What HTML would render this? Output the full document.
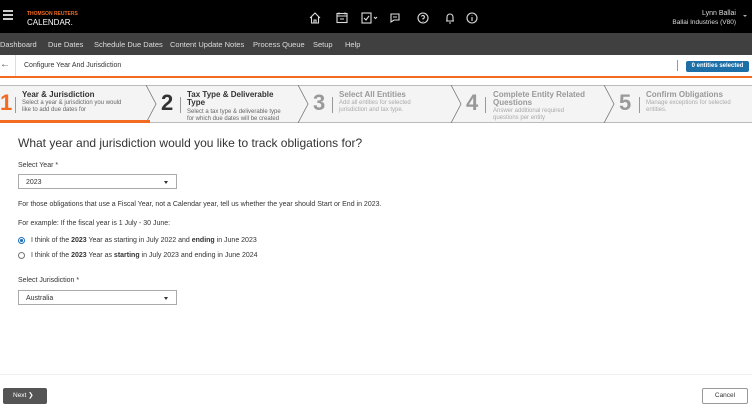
<!DOCTYPE html>
<html><head><meta charset="utf-8"><style>
*{box-sizing:border-box;margin:0;padding:0}
body{width:752px;height:418px;overflow:hidden;background:#fff;font-family:"Liberation Sans",sans-serif;color:#333;position:relative}
.abs{position:absolute}
.top{left:0;top:0;width:752px;height:33px;background:#000}
.nav{left:0;top:33px;width:752px;height:22px;background:#404040;color:#ddd;font-size:7.5px}
.nav span{position:absolute;top:7px}
.tb{left:0;top:55px;width:752px;height:23px;background:#fff;border-bottom:2px solid #f26b21}
.step{top:85px;height:38px;background:#f4f4f4;border-top:1px solid #bbb;border-bottom:1px solid #bbb}
.num{position:absolute;font-size:22px;font-weight:bold;top:4px}
.st{position:absolute;font-size:8px;font-weight:bold;line-height:8px}
.sd{position:absolute;font-size:6px;line-height:7px;color:#666}
.g .num,.g .st{color:#999}.g .sd{color:#aaa}
.bar{position:absolute;width:1px;height:16px;background:#999;top:11px}
.t{font-size:7px;color:#333}
.sel{border:1px solid #aaa;height:15px;width:159px;left:18px;font-size:7px;padding:4px 7px}
.sel:after{content:"";position:absolute;right:8px;top:6px;border:2.5px solid transparent;border-top:3px solid #333}
</style></head><body>
<div class="abs top">
 <div class="abs" style="left:3px;top:10px;width:10px;height:2px;background:#ccc;box-shadow:0 4px 0 #ccc,0 8px 0 #ccc"></div>
 <div class="abs" style="left:27px;top:11px;font-size:5px;font-weight:bold;color:#f26b21">THOMSON REUTERS</div>
 <div class="abs" style="left:27px;top:18px;font-size:8px;color:#fff">CALENDAR.</div>
 <svg class="abs" style="left:308px;top:11px" width="180" height="14" fill="none" stroke="#ddd" stroke-width="1.1">
  <path d="M2 7L7 2L12 7M3.5 6v6h7V6M6 12V9h2v3"/>
  <rect x="29" y="2.5" width="10" height="9"/><path d="M29 5h10M31 1.5v2M37 1.5v2M32 8h4"/>
  <rect x="54" y="2" width="9" height="10"/><path d="M56 7l2 2 3-4M66 6l1.5 1.5 1.5-1.5"/>
  <path d="M83 3h8v6h-5l-3 2zM85 6h4"/>
  <circle cx="115" cy="7" r="5"/><path d="M113.5 5.5a1.5 1.5 0 1 1 1.5 2v1M115 10v.5"/>
  <path d="M138 10h8M139 10V6a3 3 0 0 1 6 0v4M141 12h2"/>
  <circle cx="164" cy="7" r="5"/><path d="M164 6v4M164 4v.5"/>
 </svg>
 <div class="abs" style="right:16px;top:9px;font-size:7px;color:#ddd;text-align:right;line-height:9px">Lynn Ballai<br><span style="font-size:6.5px">Ballai Industries (V80)</span></div>
 <div class="abs" style="right:5px;top:15px;border:2px solid transparent;border-top:2.5px solid #aaa"></div>
</div>
<div class="abs nav"><span style="left:0">Dashboard</span><span style="left:48px">Due Dates</span><span style="left:94px">Schedule Due Dates</span><span style="left:170px">Content Update Notes</span><span style="left:253px">Process Queue</span><span style="left:313px">Setup</span><span style="left:345px">Help</span></div>
<div class="abs tb">
 <div class="abs" style="left:0;top:4px;font-size:10px;color:#555">&#8592;</div>
 <div class="abs" style="left:15px;top:0;width:1px;height:21px;background:#ddd"></div>
 <div class="abs" style="left:24px;top:7px;font-size:7px;color:#333">Configure Year And Jurisdiction</div>
 <div class="abs" style="left:677px;top:5px;width:1px;height:11px;background:#999"></div>
 <div class="abs" style="left:686px;top:6px;width:63px;height:11px;background:#1e6fa8;border-radius:2px;color:#fff;font-size:6px;font-weight:bold;text-align:center;line-height:11px">0 entities selected</div>
</div>
<div class="abs step" style="left:0;width:752px">
 <svg class="abs" style="left:0;top:-1px" width="752" height="38" fill="none" stroke="#777" stroke-width="0.8">
  <path d="M146 0l10 19-10 19M298 0l10 19-10 19M451 0l10 19-10 19M604 0l10 19-10 19"/>
 </svg>
 <div class="abs" style="left:0;top:34px;width:150px;height:3px;background:#f26b21"></div>
 <div class="num" style="left:0;color:#f26b21">1</div><div class="bar" style="left:15px"></div>
 <div class="st" style="left:22px;top:5px">Year &amp; Jurisdiction</div>
 <div class="sd" style="left:22px;top:14px">Select a year &amp; jurisdiction you would<br>like to add due dates for</div>
 <div class="num" style="left:161px">2</div><div class="bar" style="left:180px"></div>
 <div class="st" style="left:187px;top:5px">Tax Type &amp; Deliverable<br>Type</div>
 <div class="sd" style="left:187px;top:23px">Select a tax type &amp; deliverable type<br>for which due dates will be created</div>
 <div class="g"><div class="num" style="left:313px">3</div><div class="bar" style="left:332px"></div>
 <div class="st" style="left:339px;top:5px">Select All Entities</div>
 <div class="sd" style="left:339px;top:14px">Add all entities for selected<br>jurisdiction and tax type.</div>
 <div class="num" style="left:466px">4</div><div class="bar" style="left:485px"></div>
 <div class="st" style="left:493px;top:5px">Complete Entity Related<br>Questions</div>
 <div class="sd" style="left:493px;top:22px">Answer additional required<br>questions per entity</div>
 <div class="num" style="left:619px">5</div><div class="bar" style="left:639px"></div>
 <div class="st" style="left:646px;top:5px">Confirm Obligations</div>
 <div class="sd" style="left:646px;top:14px">Manage exceptions for selected<br>entities.</div></div>
</div>
<div class="abs" style="left:18px;top:136px;font-size:12px;color:#333">What year and jurisdiction would you like to track obligations for?</div>
<div class="abs t" style="left:18px;top:162px">Select Year *</div>
<div class="abs sel" style="top:174px">2023</div>
<div class="abs t" style="left:18px;top:201px">For those obligations that use a Fiscal Year, not a Calendar year, tell us whether the year should Start or End in 2023.</div>
<div class="abs t" style="left:18px;top:220px">For example: If the fiscal year is 1 July - 30 June:</div>
<div class="abs" style="left:18px;top:237px;width:7px;height:7px;border-radius:50%;border:1px solid #1e73be;background:radial-gradient(#1e73be 40%,#fff 50%)"></div>
<div class="abs t" style="left:31px;top:237px">I think of the <b>2023</b> Year as starting in July 2022 and <b>ending</b> in June 2023</div>
<div class="abs" style="left:18px;top:252px;width:7px;height:7px;border-radius:50%;border:1px solid #777"></div>
<div class="abs t" style="left:31px;top:252px">I think of the <b>2023</b> Year as <b>starting</b> in July 2023 and ending in June 2024</div>
<div class="abs t" style="left:18px;top:277px">Select Jurisdiction *</div>
<div class="abs sel" style="top:290px">Australia</div>
<div class="abs" style="left:0;top:374px;width:752px;height:1px;background:#eee"></div>
<div class="abs" style="left:3px;top:388px;width:44px;height:16px;background:#555;border-radius:2px;color:#fff;font-size:6.5px;line-height:16px;padding-left:10px">Next &#10095;</div>
<div class="abs" style="left:702px;top:388px;width:46px;height:16px;border:1px solid #999;border-radius:2px;font-size:6.5px;line-height:14px;text-align:center">Cancel</div>
</body></html>
